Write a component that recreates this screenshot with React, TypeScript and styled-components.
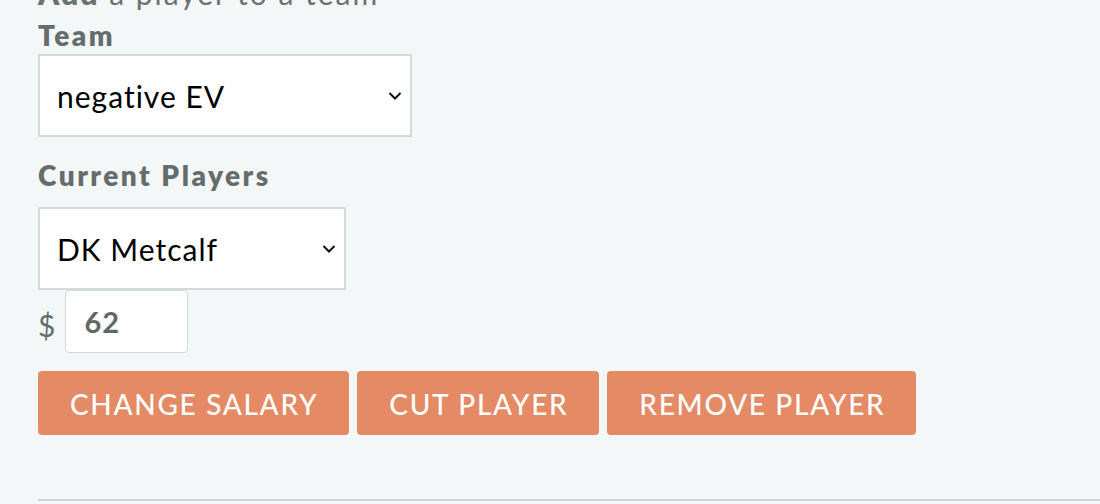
import React from "react";
import styled, { createGlobalStyle } from "styled-components";

const GlobalStyle = createGlobalStyle`
  html, body {
    margin: 0;
    padding: 0;
    background: #f4f7f8;
    font-family: "Lato", "Liberation Sans", sans-serif;
  }
`;

const Page = styled.div`
  padding: 0 0 0 38px;
  height: 504px;
  overflow: hidden;
  box-sizing: border-box;
`;

const Heading = styled.h2`
  margin: -23px 0 0;
  font-size: 30px;
  line-height: 32px;
  font-weight: 400;
  letter-spacing: 2px;
  color: #6a7270;
  b {
    font-weight: 800;
  }
`;

const Label = styled.div<{ $top: number }>`
  margin-top: ${(p) => p.$top}px;
  font-size: 28px;
  line-height: 32px;
  font-weight: 800;
  letter-spacing: 2.5px;
  color: #646d6b;
`;

const SelectWrap = styled.div<{ $width: number; $top: number }>`
  position: relative;
  width: ${(p) => p.$width}px;
  margin-top: ${(p) => p.$top}px;
`;

const Select = styled.select`
  appearance: none;
  width: 100%;
  height: 83px;
  box-sizing: border-box;
  border: 2px solid #d3dbd9;
  border-radius: 0;
  background: #ffffff;
  padding: 0 40px 0 17px;
  font-family: inherit;
  font-size: 30px;
  letter-spacing: 1px;
  color: #000;
  outline: none;
`;

const Chevron = styled.svg`
  position: absolute;
  right: 10px;
  top: 50%;
  transform: translateY(-50%);
  pointer-events: none;
`;

const SalaryRow = styled.div`
  display: flex;
  align-items: center;
  gap: 10px;
`;

const Dollar = styled.span`
  font-size: 30px;
  color: #646d6b;
  padding-top: 6px;
`;

const SalaryInput = styled.input`
  width: 123px;
  height: 63px;
  box-sizing: border-box;
  border: 1px solid #d3dbd9;
  border-radius: 4px;
  background: #ffffff;
  padding: 0 18px;
  font-family: inherit;
  font-size: 29px;
  font-weight: 700;
  letter-spacing: 1px;
  color: #5f6866;
  outline: none;
`;

const ButtonRow = styled.div`
  display: flex;
  gap: 8px;
  margin-top: 18px;
`;

const ActionButton = styled.button`
  height: 64px;
  padding: 2px 31px 0 32px;
  border: none;
  border-radius: 4px;
  background: #e48b66;
  color: #ffffff;
  font-family: inherit;
  font-size: 28px;
  font-weight: 500;
  letter-spacing: 1.7px;
  text-transform: uppercase;
  cursor: pointer;
`;

const Divider = styled.hr`
  margin: 64px 0 0;
  border: none;
  height: 2px;
  background: #d0d6d6;
`;

const ChevronIcon = () => (
  <Chevron width="14" height="9" viewBox="0 0 14 9">
    <path d="M1.5 1.5 L7 7 L12.5 1.5" fill="none" stroke="#111" strokeWidth="2" />
  </Chevron>
);

export default function App() {
  return (
    <>
      <GlobalStyle />
      <Page>
        <Heading>
          <b>Add</b> a player to a team
        </Heading>
        <Label $top={10}>Team</Label>
        <SelectWrap $width={374} $top={3}>
          <Select defaultValue="negative EV">
            <option>negative EV</option>
          </Select>
          <ChevronIcon />
        </SelectWrap>
        <Label $top={22}>Current Players</Label>
        <SelectWrap $width={308} $top={16}>
          <Select defaultValue="DK Metcalf">
            <option>DK Metcalf</option>
          </Select>
          <ChevronIcon />
        </SelectWrap>
        <SalaryRow>
          <Dollar>$</Dollar>
          <SalaryInput defaultValue="62" />
        </SalaryRow>
        <ButtonRow>
          <ActionButton>Change Salary</ActionButton>
          <ActionButton>Cut Player</ActionButton>
          <ActionButton>Remove Player</ActionButton>
        </ButtonRow>
        <Divider />
      </Page>
    </>
  );
}
